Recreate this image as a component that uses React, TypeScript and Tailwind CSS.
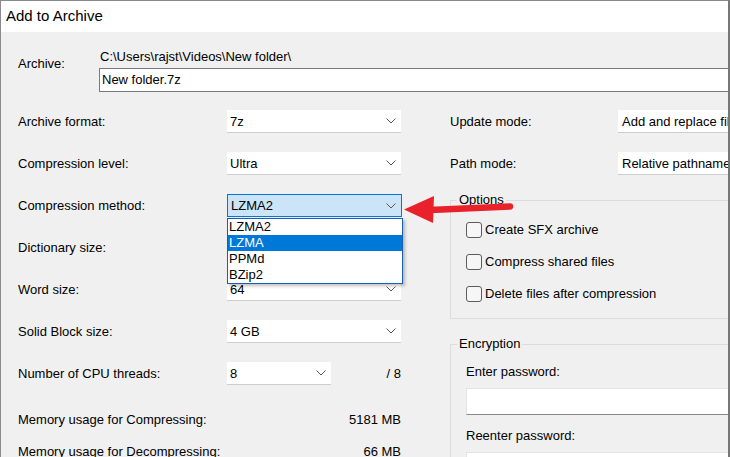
import React from "react";

const Chevron = () => (
  <svg width="10" height="6" viewBox="0 0 10 6" fill="none" className="shrink-0">
    <path d="M0.5 0.5 L5 5 L9.5 0.5" stroke="#5a5a5a" strokeWidth="1" />
  </svg>
);

function Combo({ value, className = "", active = false, chevron = true }: { value: string; className?: string; active?: boolean; chevron?: boolean }) {
  return (
    <div
      className={
        "h-[23px] flex items-center justify-between pl-[3px] pr-[5px] shrink-0 " +
        (active ? "bg-[#cce4f7] border border-[#0078d7] pl-[2px]" : "bg-white border-b border-[#cdcdcd]") +
        " " +
        className
      }
    >
      <span className="whitespace-nowrap leading-[16px] pt-[1px]">{value}</span>
      {chevron && <Chevron />}
    </div>
  );
}

function Row({ label, children, className = "" }: { label: string; children: React.ReactNode; className?: string }) {
  return (
    <div className={"flex items-center h-[23px] " + className}>
      <div className="w-[209px] shrink-0 whitespace-nowrap leading-[16px] pt-[1px]">{label}</div>
      {children}
    </div>
  );
}

function Check({ label, className = "" }: { label: string; className?: string }) {
  return (
    <div className={"flex items-center h-[16px] " + className}>
      <div className="w-[16px] h-[16px] border border-[#5c5c5c] rounded-[3px] bg-[#f6f6f6] shrink-0" />
      <span className="ml-[3px] whitespace-nowrap leading-[16px]">{label}</span>
    </div>
  );
}

export default function App() {
  return (
    <div
      className="relative w-[730px] h-[457px] overflow-hidden border-t border-l border-[#8a8a8a] border-r-2 border-r-[#777777] bg-[#f0f0f0] text-black text-[13px]"
      style={{ fontFamily: '"Liberation Sans", Arial, sans-serif' }}
    >
      {/* Title bar */}
      <div className="h-[31px] bg-white flex items-center pl-[5px] text-[15px]">Add to Archive</div>

      {/* Content */}
      <div className="pl-[17px] pt-[17px]">
        {/* Archive */}
        <div className="flex">
          <div className="w-[81px] shrink-0 pt-[7px] leading-[16px]">Archive:</div>
          <div className="flex flex-col w-[700px] shrink-0">
            <div className="leading-[16px] pl-[1px]">C:\Users\rajst\Videos\New folder\</div>
            <div className="mt-[3px] h-[24px] bg-white border border-[#7a7a7a] flex items-center pl-[2px]">
              New folder.7z
            </div>
          </div>
        </div>

        <div className="flex mt-[18px]">
          {/* Left column */}
          <div className="w-[384px] shrink-0 flex flex-col">
            <Row label="Archive format:">
              <Combo value="7z" className="w-[174px]" />
            </Row>
            <Row label="Compression level:" className="mt-[19px]">
              <Combo value="Ultra" className="w-[174px]" />
            </Row>
            <Row label="Compression method:" className="mt-[19px]">
              <Combo value="LZMA2" className="w-[175px]" active />
            </Row>
            <Row label="Dictionary size:" className="mt-[19px]">
              <Combo value="64 MB" className="w-[174px]" />
            </Row>
            <Row label="Word size:" className="mt-[19px]">
              <Combo value="64" className="w-[174px]" />
            </Row>
            <Row label="Solid Block size:" className="mt-[19px]">
              <Combo value="4 GB" className="w-[174px]" />
            </Row>
            <Row label="Number of CPU threads:" className="mt-[19px]">
              <Combo value="8" className="w-[104px]" />
              <div className="w-[70px] text-right leading-[16px] pt-[1px]">/ 8</div>
            </Row>
            <div className="flex mt-[27px] leading-[16px] w-[383px] justify-between">
              <span>Memory usage for Compressing:</span>
              <span>5181 MB</span>
            </div>
            <div className="flex mt-[16px] leading-[16px] w-[383px] justify-between">
              <span>Memory usage for Decompressing:</span>
              <span>66 MB</span>
            </div>
          </div>

          {/* Right column */}
          <div className="ml-[48px] w-[320px] shrink-0 flex flex-col">
            <div className="flex items-center h-[23px]">
              <div className="w-[168px] shrink-0 leading-[16px] pt-[1px]">Update mode:</div>
              <Combo value="Add and replace files" className="w-[200px] pl-[4px]" />
            </div>
            <div className="flex items-center h-[23px] mt-[19px]">
              <div className="w-[168px] shrink-0 leading-[16px] pt-[1px]">Path mode:</div>
              <Combo value="Relative pathnames" className="w-[200px] pl-[4px]" />
            </div>

            <fieldset className="mt-[17px] border border-[#dcdcdc] w-[320px]">
              <legend className="ml-[6px] px-[2px] leading-[16px]">Options</legend>
              <div className="pl-[15px] pb-[16px]">
                <Check label="Create SFX archive" className="mt-[14px]" />
                <Check label="Compress shared files" className="mt-[16px]" />
                <Check label="Delete files after compression" className="mt-[16px]" />
              </div>
            </fieldset>

            <fieldset className="mt-[17px] border border-[#dcdcdc] w-[320px]">
              <legend className="ml-[6px] px-[2px] leading-[16px]">Encryption</legend>
              <div className="pl-[15px] pb-[16px]">
                <div className="mt-[12px] leading-[16px]">Enter password:</div>
                <div className="mt-[8px] h-[27px] bg-white border-t border-[#e3e3e3] border-b border-b-[#8a8a8a] border-l border-l-[#e3e3e3]" />
                <div className="mt-[13px] leading-[16px]">Reenter password:</div>
                <div className="mt-[8px] h-[27px] bg-white border-t border-[#e3e3e3] border-b border-b-[#8a8a8a] border-l border-l-[#e3e3e3]" />
              </div>
            </fieldset>
          </div>
        </div>
      </div>

      {/* Open dropdown list */}
      <div className="absolute left-[226px] top-[217px] w-[176px] bg-white border border-[#1c5fb0] shadow-[2px_2px_3px_rgba(0,0,0,0.25)] leading-[16px]">
        <div className="h-[16px] pl-[1px]">LZMA2</div>
        <div className="h-[16px] pl-[1px] bg-[#0078d7] text-white">LZMA</div>
        <div className="h-[16px] pl-[1px]">PPMd</div>
        <div className="h-[16px] pl-[1px]">BZip2</div>
      </div>

      {/* Red arrow annotation */}
      <svg className="absolute left-[399px] top-[189px]" width="120" height="40" viewBox="0 0 120 40">
        <path d="M4 19.5 L34 6 L33 33 Z" fill="#e8212b" />
        <path d="M30 20 L110 16.5" stroke="#e8212b" strokeWidth="6.5" strokeLinecap="round" />
      </svg>
    </div>
  );
}
